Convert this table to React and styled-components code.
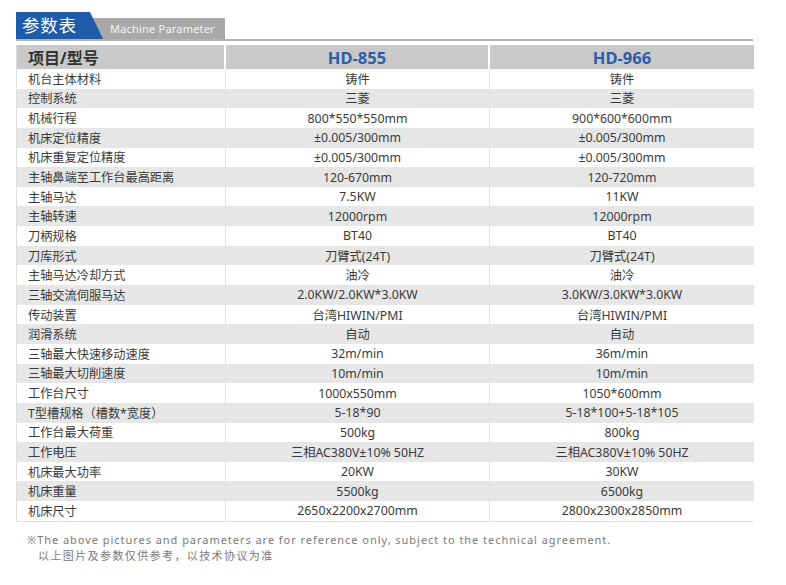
import React from "react";
import styled, { createGlobalStyle } from "styled-components";

const Global = createGlobalStyle`
  html, body { margin: 0; padding: 0; background: #fff; }
  body { font-family: "Noto Sans", "Noto Sans CJK SC", sans-serif; color: #333; }
`;

const Page = styled.div`
  width: 786px;
  height: 585px;
  box-sizing: border-box;
  padding: 12px 0 0 16px;
  overflow: hidden;
`;

const Wrap = styled.div`
  width: 737px;
`;

const TabBar = styled.div`
  display: flex;
  align-items: flex-end;
  height: 27px;
  border-bottom: 2px solid #b4b4b4;
`;

const MainTab = styled.div`
  position: relative;
  z-index: 1;
  width: 87px;
  height: 27px;
  background: #1e5ba8;
  clip-path: polygon(0 0, 74px 0, 87px 100%, 0 100%);
  color: #fff;
  font-family: "Noto Sans CJK SC", sans-serif;
  font-size: 17.5px;
  line-height: 26px;
  padding-left: 6px;
  box-sizing: border-box;
  letter-spacing: 0.8px;
`;

const SubTab = styled.div`
  margin-left: -13px;
  width: 135px;
  height: 21px;
  background: #a9a9a9;
  color: #f4f4f4;
  font-family: "Noto Sans", sans-serif;
  font-size: 11px;
  line-height: 21px;
  padding-left: 20px;
  box-sizing: border-box;
  letter-spacing: 0.2px;
`;

const Table = styled.div`
  margin-top: 4px;
  display: grid;
  grid-template-columns: 209px 264px 264px;
  border: 1px solid #dedede;
  border-top: none;
  box-sizing: border-box;
`;

const HeadCell = styled.div`
  height: 24px;
  background: #c9c9c9;
  display: flex;
  align-items: center;
  justify-content: ${(p) => (p.$first ? "flex-start" : "center")};
  padding-left: ${(p) => (p.$first ? "11px" : "0")};
  border-right: ${(p) => (p.$last ? "none" : "2px solid #fff")};
  font-family: "Noto Sans", "Noto Sans CJK SC", sans-serif;
  font-weight: 700;
  font-size: ${(p) => (p.$first ? "16px" : "16.5px")};
  color: ${(p) => (p.$first ? "#333" : "#2d5ca8")};
  box-sizing: border-box;
`;

const Cell = styled.div`
  height: 19.65px;
  background: ${(p) => (p.$alt ? "#e6e6e6" : "#fff")};
  display: flex;
  align-items: center;
  justify-content: ${(p) => (p.$first ? "flex-start" : "center")};
  padding-left: ${(p) => (p.$first ? "11px" : "0")};
  border-right: ${(p) => (p.$last ? "none" : "1px solid #e2e2e2")};
  font-family: "Noto Sans", "Noto Sans CJK SC", sans-serif;
  font-size: ${(p) => (p.$first ? "12.2px" : "12.3px")};
  color: #3a3a3a;
  white-space: nowrap;
  box-sizing: border-box;
`;

const Notes = styled.div`
  margin-top: 10px;
  padding-left: 11px;
  color: #7a7a7a;
  font-family: "Noto Sans", "Noto Sans CJK SC", sans-serif;
  font-size: 11px;
  line-height: 16px;
`;

const NoteEn = styled.div`
  letter-spacing: 0.96px;
`;

const NoteCn = styled.div`
  padding-left: 11px;
  letter-spacing: 1.4px;
`;

const rows = [
  ["机台主体材料", "铸件", "铸件"],
  ["控制系统", "三菱", "三菱"],
  ["机械行程", "800*550*550mm", "900*600*600mm"],
  ["机床定位精度", "±0.005/300mm", "±0.005/300mm"],
  ["机床重复定位精度", "±0.005/300mm", "±0.005/300mm"],
  ["主轴鼻端至工作台最高距离", "120-670mm", "120-720mm"],
  ["主轴马达", "7.5KW", "11KW"],
  ["主轴转速", "12000rpm", "12000rpm"],
  ["刀柄规格", "BT40", "BT40"],
  ["刀库形式", "刀臂式(24T)", "刀臂式(24T)"],
  ["主轴马达冷却方式", "油冷", "油冷"],
  ["三轴交流伺服马达", "2.0KW/2.0KW*3.0KW", "3.0KW/3.0KW*3.0KW"],
  ["传动装置", "台湾HIWIN/PMI", "台湾HIWIN/PMI"],
  ["润滑系统", "自动", "自动"],
  ["三轴最大快速移动速度", "32m/min", "36m/min"],
  ["三轴最大切削速度", "10m/min", "10m/min"],
  ["工作台尺寸", "1000x550mm", "1050*600mm"],
  ["T型槽规格（槽数*宽度）", "5-18*90", "5-18*100+5-18*105"],
  ["工作台最大荷重", "500kg", "800kg"],
  ["工作电压", "三相AC380V±10% 50HZ", "三相AC380V±10% 50HZ"],
  ["机床最大功率", "20KW", "30KW"],
  ["机床重量", "5500kg", "6500kg"],
  ["机床尺寸", "2650x2200x2700mm", "2800x2300x2850mm"],
];

export default function App() {
  return (
    <Page>
      <Global />
      <Wrap>
        <TabBar>
          <MainTab>参数表</MainTab>
          <SubTab>Machine Parameter</SubTab>
        </TabBar>
        <Table>
          <HeadCell $first>项目/型号</HeadCell>
          <HeadCell>HD-855</HeadCell>
          <HeadCell $last>HD-966</HeadCell>
          {rows.map((r, i) =>
            r.map((c, j) => (
              <Cell key={`${i}-${j}`} $alt={i % 2 === 1} $first={j === 0} $last={j === 2}>
                {c}
              </Cell>
            ))
          )}
        </Table>
        <Notes>
          <NoteEn>※The above pictures and parameters are for reference only, subject to the technical agreement.</NoteEn>
          <NoteCn>以上图片及参数仅供参考，以技术协议为准</NoteCn>
        </Notes>
      </Wrap>
    </Page>
  );
}
